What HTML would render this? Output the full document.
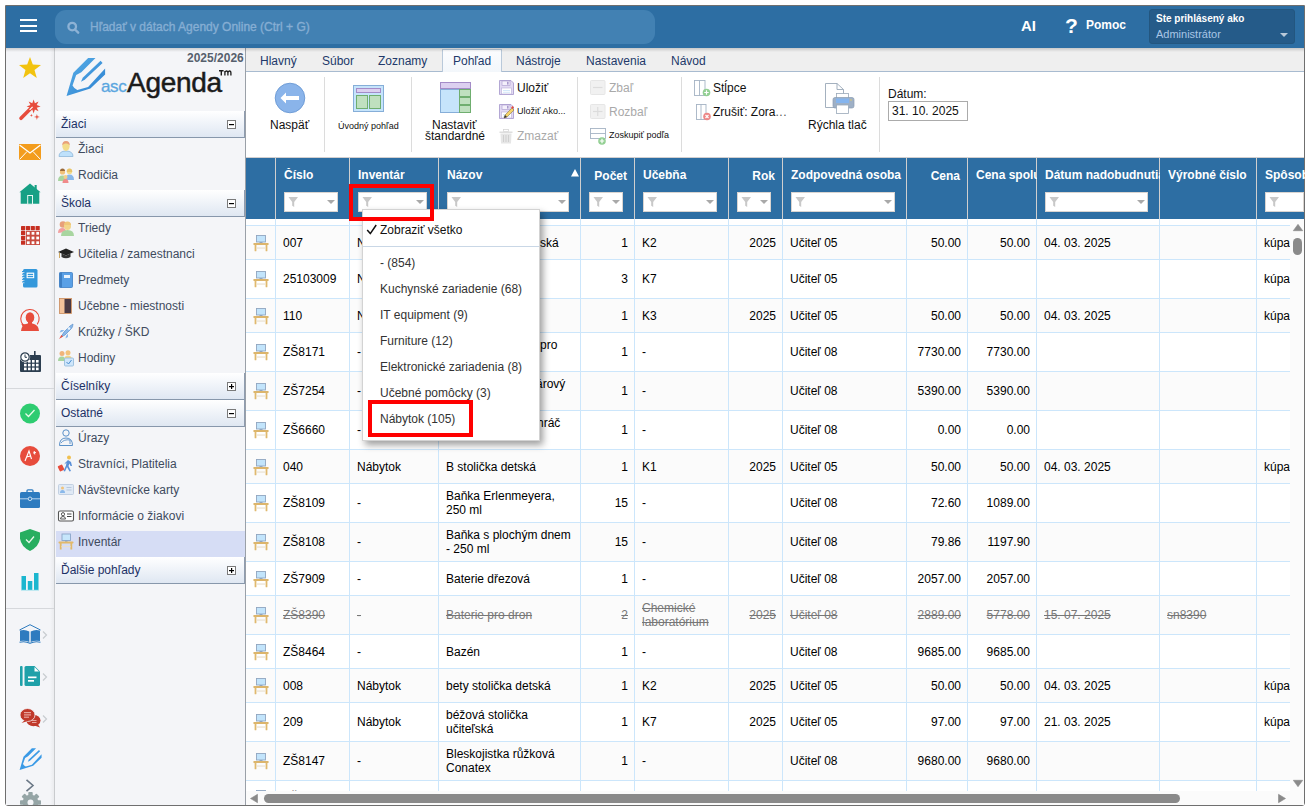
<!DOCTYPE html>
<html><head><meta charset="utf-8"><title>Agenda</title>
<style>
*{box-sizing:border-box}
html,body{margin:0;padding:0}
body{width:1310px;height:811px;background:#fff;position:relative;overflow:hidden;font-family:"Liberation Sans",sans-serif;font-size:12px;color:#000}
.a{position:absolute}
.t{position:absolute;white-space:nowrap;line-height:14px}
svg{position:absolute;overflow:visible}
</style></head><body>

<div class="a" style="left:5px;top:5px;width:1300px;height:801px;border:1px solid #6f6f6f;border-radius:0 0 3px 3px"></div>
<div class="a" style="left:6px;top:6px;width:1298px;height:42px;background:#2d6ea3"></div>
<div class="a" style="left:6px;top:48px;width:1298px;height:4px;background:linear-gradient(rgba(0,0,0,0.16),rgba(0,0,0,0));z-index:5"></div>
<div class="a" style="left:20px;top:19px;width:17px;height:2px;background:#fff"></div>
<div class="a" style="left:20px;top:25px;width:17px;height:2px;background:#fff"></div>
<div class="a" style="left:20px;top:30px;width:17px;height:2px;background:#fff"></div>
<div class="a" style="left:55px;top:10px;width:600px;height:34px;border-radius:11px;background:#4281b3"></div>
<svg style="left:67px;top:22px" width="12" height="12" viewBox="0 0 12 12"><circle cx="5.2" cy="4.6" r="3.8" fill="none" stroke="#8db2d5" stroke-width="2.3"/><line x1="8" y1="7.5" x2="11.2" y2="10.7" stroke="#8db2d5" stroke-width="2.4" stroke-linecap="round"/></svg>
<div class="t" style="left:90px;top:20px;font-size:12px;color:#86aed3;-webkit-text-stroke:0.35px #86aed3">Hľadať v dátach Agendy Online (Ctrl + G)</div>
<div class="t" style="left:1021px;top:18px;font-size:15px;line-height:16px;font-weight:bold;color:#fff">AI</div>
<div class="t" style="left:1065px;top:15px;font-size:21px;line-height:22px;font-weight:bold;color:#fff">?</div>
<div class="t" style="left:1086px;top:18px;font-size:12px;font-weight:bold;color:#fff">Pomoc</div>
<div class="a" style="left:1149px;top:9px;width:146px;height:35px;border-radius:3px;background:#255b89;border:1px solid #23567f"></div>
<div class="t" style="left:1156px;top:13px;font-size:10px;line-height:12px;font-weight:bold;color:#fff">Ste prihlásený ako</div>
<div class="t" style="left:1156px;top:28px;font-size:11px;line-height:13px;color:#a9c6e6">Administrátor</div>
<svg style="left:1280px;top:33px" width="8" height="4" viewBox="0 0 8 4"><polygon points="0,0 8,0 4,4" fill="#b9c9d9"/></svg>
<div class="a" style="left:6px;top:48px;width:48px;height:757px;background:#f4f5f8"></div>
<div class="a" style="left:50px;top:48px;width:4px;height:757px;background:linear-gradient(90deg,rgba(0,0,0,0),rgba(0,0,0,0.04))"></div>
<div class="a" style="left:54px;top:48px;width:1px;height:757px;background:#c9cbce"></div>
<div class="a" style="left:6px;top:388px;width:48px;height:1px;background:#d6d8dc"></div>
<div class="a" style="left:6px;top:608px;width:48px;height:1px;background:#d6d8dc"></div>
<svg style="left:19px;top:57px" width="22" height="21" viewBox="0 0 22 21"><polygon points="11,0 13.8,7.6 22,7.9 15.5,12.9 17.8,21 11,16.3 4.2,21 6.5,12.9 0,7.9 8.2,7.6" fill="#f2c30f"/></svg>
<svg style="left:16px;top:96px" width="28" height="28" viewBox="0 0 28 28"><line x1="5" y1="22.3" x2="15.5" y2="11.8" stroke="#e74c3c" stroke-width="3.6" stroke-linecap="round"/><polygon points="17.60,3.40 18.90,7.26 22.55,5.45 20.74,9.10 24.60,10.40 20.74,11.70 22.55,15.35 18.90,13.54 17.60,17.40 16.30,13.54 12.65,15.35 14.46,11.70 10.60,10.40 14.46,9.10 12.65,5.45 16.30,7.26" fill="#e74c3c"/><line x1="13.6" y1="13.9" x2="16.6" y2="10.9" stroke="#fff" stroke-width="1.1"/><polygon points="15.40,17.70 15.79,18.91 17.00,19.30 15.79,19.69 15.40,20.90 15.01,19.69 13.80,19.30 15.01,18.91" fill="#e74c3c"/><polygon points="20.90,17.90 21.54,20.26 23.90,20.90 21.54,21.54 20.90,23.90 20.26,21.54 17.90,20.90 20.26,20.26" fill="#e74c3c"/></svg>
<svg style="left:19px;top:144px" width="22" height="16" viewBox="0 0 22 16"><rect x="0" y="0" width="22" height="16" fill="#f39c1d"/><polyline points="0.5,1 11,9 21.5,1" fill="none" stroke="#fff" stroke-width="1.2"/><line x1="0.5" y1="15.5" x2="8" y2="7.5" stroke="#fff" stroke-width="1"/><line x1="21.5" y1="15.5" x2="14" y2="7.5" stroke="#fff" stroke-width="1"/></svg>
<svg style="left:19px;top:183px" width="22" height="21" viewBox="0 0 22 21"><polygon points="11,0.4 21.6,9.2 20.3,9.2 20.3,20.7 1.7,20.7 1.7,9.2 0.4,9.2" fill="#17a085"/><rect x="15.6" y="2" width="2.1" height="5.5" fill="#17a085"/><rect x="8.7" y="12.5" width="4.8" height="8.7" fill="#17a085" stroke="#e8f6f2" stroke-width="1"/></svg>
<svg style="left:21px;top:226px" width="19" height="19" viewBox="0 0 19 19"><rect x="0.00" y="0" width="4.2" height="4.2" rx="0.6" fill="#c62f22"/><rect x="4.85" y="0" width="4.2" height="4.2" rx="0.6" fill="#c62f22"/><rect x="9.70" y="0" width="4.2" height="4.2" rx="0.6" fill="#c62f22"/><rect x="14.55" y="0" width="4.2" height="4.2" rx="0.6" fill="#c62f22"/><rect x="0" y="4.85" width="4.2" height="4.2" rx="0.6" fill="#c62f22"/><rect x="0" y="9.70" width="4.2" height="4.2" rx="0.6" fill="#c62f22"/><rect x="0" y="14.55" width="4.2" height="4.2" rx="0.6" fill="#c62f22"/><rect x="4.85" y="4.85" width="14.15" height="14.15" fill="#c84a3e"/><rect x="5.90" y="5.90" width="2.8" height="2.8" fill="#fff"/><rect x="10.60" y="5.90" width="2.8" height="2.8" fill="#fff"/><rect x="15.30" y="5.90" width="2.8" height="2.8" fill="#fff"/><rect x="5.90" y="10.60" width="2.8" height="2.8" fill="#fff"/><rect x="10.60" y="10.60" width="2.8" height="2.8" fill="#fff"/><rect x="15.30" y="10.60" width="2.8" height="2.8" fill="#fff"/><rect x="5.90" y="15.30" width="2.8" height="2.8" fill="#fff"/><rect x="10.60" y="15.30" width="2.8" height="2.8" fill="#fff"/><rect x="15.30" y="15.30" width="2.8" height="2.8" fill="#fff"/></svg>
<svg style="left:22px;top:268px" width="16" height="20" viewBox="0 0 16 20"><rect x="1" y="1" width="14.5" height="18.5" rx="1.5" fill="#3498db"/><rect x="0" y="3.0" width="2.5" height="1.1" fill="#3498db"/><rect x="0.8" y="4.1" width="1.6" height="0.7" fill="#f4f5f8"/><rect x="0" y="5.6" width="2.5" height="1.1" fill="#3498db"/><rect x="0.8" y="6.7" width="1.6" height="0.7" fill="#f4f5f8"/><rect x="0" y="8.2" width="2.5" height="1.1" fill="#3498db"/><rect x="0.8" y="9.3" width="1.6" height="0.7" fill="#f4f5f8"/><rect x="0" y="10.8" width="2.5" height="1.1" fill="#3498db"/><rect x="0.8" y="11.9" width="1.6" height="0.7" fill="#f4f5f8"/><rect x="0" y="13.4" width="2.5" height="1.1" fill="#3498db"/><rect x="0.8" y="14.5" width="1.6" height="0.7" fill="#f4f5f8"/><rect x="4.6" y="4.6" width="7.6" height="5.6" fill="#fff"/><rect x="5.7" y="5.8" width="5.4" height="1.3" fill="#3498db"/><rect x="5.7" y="7.9" width="5.4" height="1.3" fill="#3498db"/></svg>
<svg style="left:20px;top:308px" width="20" height="23" viewBox="0 0 20 23"><path d="M3.3,17 A9.2,9.2 0 1 1 17.2,16.3" fill="none" stroke="#e74c3c" stroke-width="1.1"/><polygon points="1.2,15.8 6.2,16.6 3.2,19.6" fill="#e74c3c"/><ellipse cx="10" cy="9.5" rx="4.3" ry="5.3" fill="#e74c3c"/><path d="M1,23 Q1.3,17 7.5,15.6 L12.5,15.6 Q18.7,17 19,23 Z" fill="#e74c3c"/><rect x="8" y="13" width="4" height="3.5" fill="#e74c3c"/></svg>
<svg style="left:19px;top:351px" width="22" height="21" viewBox="0 0 22 21"><rect x="1" y="4" width="21" height="17" rx="1" fill="#2c3e50"/><rect x="15" y="0" width="1.6" height="5" fill="#2c3e50"/><rect x="5" y="9.0" width="2.6" height="2.6" fill="#fff"/><rect x="9" y="9.0" width="2.6" height="2.6" fill="#fff"/><rect x="13" y="9.0" width="2.6" height="2.6" fill="#fff"/><rect x="17" y="9.0" width="2.6" height="2.6" fill="#fff"/><rect x="5" y="12.8" width="2.6" height="2.6" fill="#fff"/><rect x="9" y="12.8" width="2.6" height="2.6" fill="#fff"/><rect x="13" y="12.8" width="2.6" height="2.6" fill="#fff"/><rect x="17" y="12.8" width="2.6" height="2.6" fill="#fff"/><rect x="5" y="16.6" width="2.6" height="2.6" fill="#fff"/><rect x="9" y="16.6" width="2.6" height="2.6" fill="#fff"/><rect x="13" y="16.6" width="2.6" height="2.6" fill="#fff"/><rect x="17" y="16.6" width="2.6" height="2.6" fill="#fff"/><circle cx="6" cy="6" r="5.2" fill="#fff"/><circle cx="6" cy="6" r="4.2" fill="none" stroke="#2c3e50" stroke-width="1.2"/><polyline points="6,3.5 6,6.3 8,6.3" fill="none" stroke="#2c3e50" stroke-width="1"/></svg>
<svg style="left:20px;top:403px" width="20" height="21" viewBox="0 0 20 21"><circle cx="10" cy="10.5" r="10" fill="#2ecc71"/><polyline points="5.5,10.5 8.5,13.5 14.5,7" fill="none" stroke="#e9fbe9" stroke-width="1.3"/></svg>
<svg style="left:20px;top:446px" width="20" height="20" viewBox="0 0 20 20"><circle cx="10" cy="10" r="10" fill="#e74c3c"/><path d="M5,15 L9,5 L11.5,13 M6.5,11 L10.5,10" fill="none" stroke="#fff" stroke-width="1.1"/><path d="M13,7 L16,6.5 M14.2,5 L14.8,8.5" fill="none" stroke="#fff" stroke-width="1"/></svg>
<svg style="left:20px;top:489px" width="20" height="19" viewBox="0 0 20 19"><rect x="7" y="0.8" width="6" height="3" rx="1" fill="none" stroke="#2e7bbf" stroke-width="1.3"/><rect x="0" y="3" width="20" height="16" rx="1.5" fill="#2e7bbf"/><rect x="0" y="9.3" width="20" height="1" fill="#b8d4ee"/><circle cx="10" cy="9.8" r="1.8" fill="#2e7bbf" stroke="#cfe2f3" stroke-width="0.9"/></svg>
<svg style="left:20px;top:529px" width="20" height="22" viewBox="0 0 20 22"><path d="M10,0 L20,3.5 L20,9.5 Q19,17.5 10,22 Q1,17.5 0,9.5 L0,3.5 Z" fill="#27ae60"/><polyline points="6,10.5 9,13.5 14,7.5" fill="none" stroke="#e6f7ea" stroke-width="1.3"/></svg>
<svg style="left:21px;top:573px" width="18" height="18" viewBox="0 0 18 18"><rect x="0.5" y="3" width="4.5" height="14" fill="#1bb6cf"/><rect x="6.8" y="8" width="4.5" height="9" fill="#1bb6cf"/><rect x="13" y="0" width="4.5" height="17" fill="#1bb6cf"/><rect x="0" y="16.8" width="18" height="1" fill="#b4e6ef"/></svg>
<svg style="left:19px;top:624px" width="22" height="20" viewBox="0 0 22 20"><polyline points="0.5,6 11,0.7 21.5,6" fill="none" stroke="#2e7bbf" stroke-width="1"/><path d="M1,6.5 Q6,5 10.3,7.5 L10.3,18 Q6,16 1,17 Z" fill="#2e7bbf"/><path d="M21,6.5 Q16,5 11.7,7.5 L11.7,18 Q16,16 21,17 Z" fill="#2e7bbf"/><path d="M0.5,18.3 Q6,16.8 11,19.3 Q16,16.8 21.5,18.3" fill="none" stroke="#2e7bbf" stroke-width="1.1"/></svg>
<svg style="left:42px;top:631px" width="6" height="8" viewBox="0 0 6 8"><polyline points="1,0.5 4.5,4 1,7.5" fill="none" stroke="#c8ccd0" stroke-width="1.2"/></svg>
<svg style="left:20px;top:666px" width="20" height="20" viewBox="0 0 20 20"><rect x="0" y="0" width="2.6" height="20" rx="1" fill="#1fa1a9"/><path d="M4.5,1.5 Q4.5,0 6,0 L14.5,0 L20,5.5 L20,18.5 Q20,20 18.5,20 L6,20 Q4.5,20 4.5,18.5 Z" fill="#1fa1a9"/><polygon points="14.5,1 14.5,5.5 19,5.5" fill="#fff"/><rect x="8" y="10.5" width="8.5" height="1.7" fill="#fff"/><rect x="8" y="14" width="6" height="1.7" fill="#fff"/></svg>
<svg style="left:42px;top:673px" width="6" height="8" viewBox="0 0 6 8"><polyline points="1,0.5 4.5,4 1,7.5" fill="none" stroke="#c8ccd0" stroke-width="1.2"/></svg>
<svg style="left:20px;top:708px" width="21" height="20" viewBox="0 0 21 20"><ellipse cx="13.5" cy="12.5" rx="7" ry="5.8" fill="#c0392b"/><polygon points="13,17 20,19.5 17,15" fill="#c0392b"/><ellipse cx="7.5" cy="7" rx="7.5" ry="6.5" fill="#c0392b" stroke="#f4f5f8" stroke-width="0.8"/><polygon points="1.5,15 5,12 8,13" fill="#c0392b"/><rect x="4" y="4" width="7" height="1.2" fill="#e8a59e"/><rect x="4" y="6.3" width="7" height="1.2" fill="#e8a59e"/><rect x="4" y="8.6" width="5" height="1.2" fill="#e8a59e"/><rect x="12" y="12" width="4.5" height="1" fill="#e8a59e"/><rect x="12" y="14" width="4.5" height="1" fill="#e8a59e"/></svg>
<svg style="left:42px;top:715px" width="6" height="8" viewBox="0 0 6 8"><polyline points="1,0.5 4.5,4 1,7.5" fill="none" stroke="#c8ccd0" stroke-width="1.2"/></svg>
<svg style="left:16.6px;top:746.3px" width="27.4" height="26.2" viewBox="0 0 48 46"><path d="M4.54,41.99 L11.35,18.72 L26.1,3.97 L33.48,3.97 L19.29,18.16 L14.18,20.99 L10.5,31.49 Q12,34.5 15.32,36.03 L26.1,32.91 L43.12,14.47 L43.12,20.43 L28.37,34.61 Z" fill="#3a9ae6"/><path d="M38.58,6.81 L40.57,9.08 L22.7,25.82 L19.0,27.8 L20.71,23.83 Z" fill="#3a9ae6"/></svg>
<svg style="left:25px;top:779px" width="10" height="13" viewBox="0 0 10 13"><polyline points="1.5,0.8 8,6.5 1.5,12.2" fill="none" stroke="#6b7886" stroke-width="1.6"/></svg>
<div class="a" style="left:6px;top:780px;width:48px;height:25px;overflow:hidden"><svg style="left:14px;top:12px" width="21" height="21" viewBox="-10.5 -10.5 21 21"><g fill="#95a5a6"><rect x="-2.2" y="-10.5" width="4.4" height="5" rx="0.8" transform="rotate(0)"/><rect x="-2.2" y="-10.5" width="4.4" height="5" rx="0.8" transform="rotate(45)"/><rect x="-2.2" y="-10.5" width="4.4" height="5" rx="0.8" transform="rotate(90)"/><rect x="-2.2" y="-10.5" width="4.4" height="5" rx="0.8" transform="rotate(135)"/><rect x="-2.2" y="-10.5" width="4.4" height="5" rx="0.8" transform="rotate(180)"/><rect x="-2.2" y="-10.5" width="4.4" height="5" rx="0.8" transform="rotate(225)"/><rect x="-2.2" y="-10.5" width="4.4" height="5" rx="0.8" transform="rotate(270)"/><rect x="-2.2" y="-10.5" width="4.4" height="5" rx="0.8" transform="rotate(315)"/><circle cx="0" cy="0" r="7.8"/></g><circle cx="0" cy="0" r="3" fill="#f4f5f8"/></svg></div>
<div class="a" style="left:55px;top:48px;width:190px;height:757px;background:#f4f5f8"></div>
<div class="a" style="left:245px;top:48px;width:1px;height:757px;background:#9aa0a8"></div>
<div class="t" style="left:187px;top:51px;font-size:12px;font-weight:bold;color:#56606d">2025/2026</div>
<svg style="left:62px;top:54px" width="48" height="46" viewBox="0 0 48 46"><defs><linearGradient id="pg" x1="0" y1="0" x2="1" y2="1"><stop offset="0" stop-color="#5ab0e8"/><stop offset="1" stop-color="#2a7fd0"/></linearGradient></defs><path d="M4.54,41.99 L11.35,18.72 L26.1,3.97 L33.48,3.97 L19.29,18.16 L14.18,20.99 L10.5,31.49 Q12,34.5 15.32,36.03 L26.1,32.91 L43.12,14.47 L43.12,20.43 L28.37,34.61 Z" fill="url(#pg)"/><path d="M38.58,6.81 L40.57,9.08 L22.7,25.82 L19.0,27.8 L20.71,23.83 Z" fill="url(#pg)"/></svg>
<div class="t" style="left:101px;top:77px;font-size:17px;line-height:20px;color:#5aa6e0;letter-spacing:-0.4px;-webkit-text-stroke:0.3px #5aa6e0">asc</div>
<div class="t" style="left:127px;top:67px;font-size:28px;line-height:32px;color:#1b1b1b;letter-spacing:-0.3px;-webkit-text-stroke:0.5px #1b1b1b">Agenda</div>
<svg style="left:219px;top:70px" width="14" height="6" viewBox="0 0 14 6"><path d="M0,0.7 H4.6 M2.3,0.7 V5.4" stroke="#1b1b1b" stroke-width="1.4" fill="none"/><path d="M5.9,5.4 V1 M5.9,2.2 Q6.9,0.6 8.1,1.1 Q8.9,1.5 8.9,2.8 V5.4 M8.9,2.4 Q9.9,0.6 11.1,1.1 Q11.9,1.5 11.9,2.8 V5.4" stroke="#1b1b1b" stroke-width="1.3" fill="none"/></svg>
<div class="a" style="left:56px;top:111px;width:189px;height:27px;background:linear-gradient(#ffffff,#dfe7f2);border-bottom:1px solid #8797ab;border-right:1px solid #8f9db0"></div>
<div class="t" style="left:61px;top:117px;font-size:12px;color:#1d3166">Žiaci</div>
<div class="a" style="left:227px;top:120px;width:9px;height:9px;border:1px solid #7a7a7a;background:#fff"></div>
<div class="a" style="left:229px;top:124px;width:5px;height:1px;background:#000;box-shadow:0 0.4px 0 rgba(0,0,0,0.5)"></div>
<svg style="left:58px;top:140px" width="16" height="17" viewBox="0 0 16 17"><path d="M1,16.5 Q1,11 8,11 Q15,11 15,16.5 Z" fill="#bfe1fb" stroke="#8fb7d9" stroke-width="0.8"/><ellipse cx="8" cy="6.3" rx="3.6" ry="4.6" fill="#f3dc8a"/><path d="M4.3,5.5 Q4,1 8,1 Q12,1 11.7,5.5 Q10,3 8,3.5 Q6,3 4.3,5.5 Z" fill="#e8a07a"/></svg>
<div class="t" style="left:78px;top:142px;font-size:12px;color:#404b5e">Žiaci</div>
<svg style="left:58px;top:166px" width="16" height="17" viewBox="0 0 16 17"><path d="M0,15 Q0,9.5 4.5,9.5 Q8.5,9.5 8.5,15 Z" fill="#a8d5a0"/><circle cx="4.5" cy="6" r="2.6" fill="#f0c27a"/><path d="M2,5 Q2,2.5 4.5,2.5 Q7,2.5 7,5 Z" fill="#9b6a3a"/><path d="M7.5,14 Q7.5,8.5 11.5,8.5 Q16,8.5 16,14 Z" fill="#8ab8ea"/><circle cx="11.5" cy="5.5" r="2.7" fill="#f3dc8a"/><path d="M8.8,6 Q8.5,2.5 11.5,2.5 Q14.5,2.5 14.2,6 Z" fill="#e8c46a"/><path d="M4.5,17 Q4.5,13 7.5,13 Q10.5,13 10.5,17 Z" fill="#f08a8a"/><circle cx="7.5" cy="11" r="2" fill="#f3cf8a"/></svg>
<div class="t" style="left:78px;top:168px;font-size:12px;color:#404b5e">Rodičia</div>
<div class="a" style="left:56px;top:190px;width:189px;height:27px;background:linear-gradient(#ffffff,#dfe7f2);border-bottom:1px solid #8797ab;border-right:1px solid #8f9db0"></div>
<div class="t" style="left:61px;top:196px;font-size:12px;color:#1d3166">Škola</div>
<div class="a" style="left:227px;top:199px;width:9px;height:9px;border:1px solid #7a7a7a;background:#fff"></div>
<div class="a" style="left:229px;top:203px;width:5px;height:1px;background:#000;box-shadow:0 0.4px 0 rgba(0,0,0,0.5)"></div>
<svg style="left:58px;top:219px" width="16" height="17" viewBox="0 0 16 17"><path d="M0,14 Q0,9 4.5,9 Q8,9 8,13 Z" fill="#f2a0a0"/><circle cx="5" cy="5.5" r="3.3" fill="#e8a07a"/><path d="M3,17 Q3,11 9.5,11 Q16,11 16,17 Z" fill="#a8d5a0"/><ellipse cx="9.5" cy="7" rx="3.5" ry="4" fill="#f3d68a"/><path d="M6,6 Q6,2.5 9.5,2.5 Q13,2.5 13,6 Z" fill="#f0c77a"/></svg>
<div class="t" style="left:78px;top:221px;font-size:12px;color:#404b5e">Triedy</div>
<svg style="left:58px;top:245px" width="16" height="17" viewBox="0 0 16 17"><polygon points="0,7 8,3.5 16,7 8,10.5" fill="#222"/><path d="M3.5,8.5 L3.5,12 Q8,14.5 12.5,12 L12.5,8.5 L8,10.5 Z" fill="#333"/><line x1="1.5" y1="7.5" x2="1.5" y2="13" stroke="#c9a050" stroke-width="0.9"/></svg>
<div class="t" style="left:78px;top:247px;font-size:12px;color:#404b5e">Učitelia / zamestnanci</div>
<svg style="left:58px;top:271px" width="16" height="17" viewBox="0 0 16 17"><rect x="1.5" y="1.5" width="13" height="15" rx="1" fill="#5aa0e6" stroke="#3e7fc4" stroke-width="0.8"/><rect x="1.5" y="1.5" width="2.5" height="15" fill="#3e7fc4"/><rect x="6" y="4" width="6" height="3" fill="#e9f3fd"/></svg>
<div class="t" style="left:78px;top:273px;font-size:12px;color:#404b5e">Predmety</div>
<svg style="left:58px;top:297px" width="16" height="17" viewBox="0 0 16 17"><rect x="1.5" y="1.5" width="12" height="15" fill="#f3c29a" stroke="#c98a5a" stroke-width="0.8"/><rect x="6.5" y="2" width="6.5" height="14" fill="#4a3a44"/></svg>
<div class="t" style="left:78px;top:299px;font-size:12px;color:#404b5e">Učebne - miestnosti</div>
<svg style="left:58px;top:323px" width="16" height="17" viewBox="0 0 16 17"><path d="M3,14 L6,9 L12,3 Q15,1 15,1 Q15,4 13,6 L7,12 Z" fill="#8ab8ea" stroke="#5a90cc" stroke-width="0.7"/><circle cx="11" cy="5.5" r="1.3" fill="#e9f3fd"/><path d="M1,16 L3.5,12 L5,13.5 Z" fill="#e74c3c"/><path d="M4,9 L1.5,9.5 L3,7 L6.5,7 Z" fill="#8ab8ea"/><path d="M8,13 L7.5,15.5 L10,14 L10,10.5 Z" fill="#8ab8ea"/></svg>
<div class="t" style="left:78px;top:325px;font-size:12px;color:#404b5e">Krúžky / ŠKD</div>
<svg style="left:58px;top:349px" width="16" height="17" viewBox="0 0 16 17"><path d="M0,12 Q0,7.5 4,7.5 Q7.5,7.5 7.5,12 Z" fill="#a8d5a0"/><circle cx="4" cy="4.5" r="2.5" fill="#f0b47a"/><path d="M6,11 Q6,6.5 10,6.5 Q14,6.5 14,11 Z" fill="#f3d68a"/><circle cx="10" cy="3.8" r="2.5" fill="#f3c27a"/><rect x="6.5" y="9" width="9" height="8" rx="1" fill="#cfe6fb" stroke="#8fb7d9" stroke-width="0.8"/><polyline points="8.5,13 10.5,15 13.5,11" fill="none" stroke="#4a8fd0" stroke-width="1"/></svg>
<div class="t" style="left:78px;top:351px;font-size:12px;color:#404b5e">Hodiny</div>
<div class="a" style="left:56px;top:373px;width:189px;height:27px;background:linear-gradient(#ffffff,#dfe7f2);border-bottom:1px solid #8797ab;border-right:1px solid #8f9db0"></div>
<div class="t" style="left:61px;top:379px;font-size:12px;color:#1d3166">Číselníky</div>
<div class="a" style="left:227px;top:382px;width:9px;height:9px;border:1px solid #7a7a7a;background:#fff"></div>
<div class="a" style="left:229px;top:386px;width:5px;height:1px;background:#000;box-shadow:0 0.4px 0 rgba(0,0,0,0.5)"></div>
<div class="a" style="left:231px;top:384px;width:1px;height:5px;background:#000;box-shadow:0.4px 0 0 rgba(0,0,0,0.5)"></div>
<div class="a" style="left:56px;top:400px;width:189px;height:27px;background:linear-gradient(#ffffff,#dfe7f2);border-bottom:1px solid #8797ab;border-right:1px solid #8f9db0"></div>
<div class="t" style="left:61px;top:406px;font-size:12px;color:#1d3166">Ostatné</div>
<div class="a" style="left:227px;top:409px;width:9px;height:9px;border:1px solid #7a7a7a;background:#fff"></div>
<div class="a" style="left:229px;top:413px;width:5px;height:1px;background:#000;box-shadow:0 0.4px 0 rgba(0,0,0,0.5)"></div>
<svg style="left:58px;top:429px" width="16" height="17" viewBox="0 0 16 17"><circle cx="8" cy="4" r="3.2" fill="none" stroke="#5a90c8" stroke-width="1"/><path d="M1.5,16.5 Q1.5,9 8,9 Q14.5,9 14.5,16.5 Z" fill="none" stroke="#5a90c8" stroke-width="1"/><path d="M3,14 Q6,10 12,11 L12,15" fill="none" stroke="#5a90c8" stroke-width="0.9"/></svg>
<div class="t" style="left:78px;top:431px;font-size:12px;color:#404b5e">Úrazy</div>
<svg style="left:58px;top:455px" width="16" height="17" viewBox="0 0 16 17"><circle cx="11" cy="2.5" r="2" fill="#f0c050"/><path d="M7,8 L10,5 L13,7 L14,11 L12.5,11 L11.5,8.5 L10.5,11 L13,16 L11.5,16.5 L9,12 L7,16.5 L5.5,16 L8,10.5 L8.5,7.5 L6.5,9.5 Z" fill="#5a90d8"/><rect x="0.5" y="10" width="5" height="6" rx="1" transform="rotate(-25 3 13)" fill="#e74c3c"/></svg>
<div class="t" style="left:78px;top:457px;font-size:12px;color:#404b5e">Stravníci, Platitelia</div>
<svg style="left:58px;top:481px" width="16" height="17" viewBox="0 0 16 17"><rect x="0.5" y="3.5" width="15" height="10" rx="1" fill="#dfe9f5" stroke="#b8c8dc" stroke-width="0.8"/><circle cx="4.5" cy="7" r="1.5" fill="#f0c27a"/><path d="M2,12 Q2,9 4.5,9 Q7,9 7,12 Z" fill="#8ab8ea"/><rect x="8.5" y="6" width="5" height="1" fill="#b8c8dc"/><rect x="8.5" y="8.5" width="5" height="1" fill="#b8c8dc"/></svg>
<div class="t" style="left:78px;top:483px;font-size:12px;color:#404b5e">Návštevnícke karty</div>
<svg style="left:58px;top:507px" width="16" height="17" viewBox="0 0 16 17"><rect x="0.5" y="4" width="15" height="10" rx="1.5" fill="#fff" stroke="#555" stroke-width="1.1"/><circle cx="5" cy="7.2" r="1.6" fill="none" stroke="#444" stroke-width="0.9"/><path d="M2.5,12 Q2.5,9.5 5,9.5 Q7.5,9.5 7.5,12 Z" fill="none" stroke="#444" stroke-width="0.9"/><rect x="9" y="6.5" width="4.5" height="1" fill="#444"/><rect x="9" y="9" width="4.5" height="1" fill="#444"/></svg>
<div class="t" style="left:78px;top:509px;font-size:12px;color:#404b5e">Informácie o žiakovi</div>
<div class="a" style="left:56px;top:531px;width:189px;height:26px;background:#d6ddf5"></div>
<svg style="left:58px;top:533px" width="16" height="17" viewBox="0 0 16 17"><rect x="4" y="1" width="8.5" height="6.5" fill="#c6e6fb" stroke="#8aa6c8" stroke-width="0.9"/><rect x="7" y="7.5" width="2.5" height="1.3" fill="#8aa6c8"/><rect x="0.5" y="8.5" width="15" height="2" rx="0.8" fill="#e2b96a"/><rect x="1.8" y="10" width="1.8" height="6.5" fill="#e2b96a"/><rect x="12.4" y="10" width="1.8" height="6.5" fill="#e2b96a"/><rect x="3.5" y="13" width="9" height="1.2" fill="#e8dfcf"/></svg>
<div class="t" style="left:78px;top:535px;font-size:12px;color:#404b5e">Inventár</div>
<div class="a" style="left:56px;top:557px;width:189px;height:27px;background:linear-gradient(#ffffff,#dfe7f2);border-bottom:1px solid #8797ab;border-right:1px solid #8f9db0"></div>
<div class="t" style="left:61px;top:563px;font-size:12px;color:#1d3166">Ďalšie pohľady</div>
<div class="a" style="left:227px;top:566px;width:9px;height:9px;border:1px solid #7a7a7a;background:#fff"></div>
<div class="a" style="left:229px;top:570px;width:5px;height:1px;background:#000;box-shadow:0 0.4px 0 rgba(0,0,0,0.5)"></div>
<div class="a" style="left:231px;top:568px;width:1px;height:5px;background:#000;box-shadow:0.4px 0 0 rgba(0,0,0,0.5)"></div>
<div class="a" style="left:246px;top:48px;width:1058px;height:24px;background:#efefef;border-bottom:1px solid #a8bbd0"></div>
<div class="a" style="left:442px;top:49px;width:60px;height:23px;background:linear-gradient(#fbfcfe,#f3f7fb);border:1px solid #b9c9da;border-bottom:none"></div>
<div class="t" style="left:260px;top:54px;color:#22396a">Hlavný</div>
<div class="t" style="left:322px;top:54px;color:#22396a">Súbor</div>
<div class="t" style="left:378px;top:54px;color:#22396a">Zoznamy</div>
<div class="t" style="left:453px;top:54px;color:#22396a">Pohľad</div>
<div class="t" style="left:516px;top:54px;color:#22396a">Nástroje</div>
<div class="t" style="left:586px;top:54px;color:#22396a">Nastavenia</div>
<div class="t" style="left:671px;top:54px;color:#22396a">Návod</div>
<div class="a" style="left:246px;top:72px;width:1058px;height:85px;background:#fff"></div>
<div class="a" style="left:324px;top:77px;width:1px;height:75px;background:#dcdcdc"></div>
<div class="a" style="left:411px;top:77px;width:1px;height:75px;background:#dcdcdc"></div>
<div class="a" style="left:577px;top:77px;width:1px;height:75px;background:#dcdcdc"></div>
<div class="a" style="left:681px;top:77px;width:1px;height:75px;background:#dcdcdc"></div>
<div class="a" style="left:879px;top:77px;width:1px;height:75px;background:#dcdcdc"></div>
<svg style="left:274px;top:82px" width="32" height="32" viewBox="0 0 32 32"><circle cx="16" cy="16" r="14.8" fill="#8ab4ea" stroke="#6a98d4" stroke-width="0.9"/><polygon points="6.5,16 12,10.5 12,14 25,14 25,18 12,18 12,21.5" fill="#fff"/></svg>
<div class="t" style="left:270px;top:118px;color:#111">Naspäť</div>
<svg style="left:353px;top:85px" width="31" height="27" viewBox="0 0 31 27"><rect x="0.5" y="0.5" width="30" height="26" fill="#c6e4fb" stroke="#86aed8"/><rect x="3.5" y="3.5" width="24" height="4" fill="#dcd0f0" stroke="#a48cc8"/><rect x="3.5" y="10.5" width="11" height="13" fill="#bfe0bf" stroke="#6fae6f"/><rect x="16.5" y="10.5" width="11" height="13" fill="#bfe0bf" stroke="#6fae6f"/></svg>
<div class="t" style="left:338px;top:121px;font-size:9px;line-height:10px;color:#111">Úvodný pohľad</div>
<svg style="left:440px;top:82px" width="31" height="31" viewBox="0 0 31 31"><rect x="0.5" y="0.5" width="30" height="6" fill="#dcd0f0" stroke="#a48cc8"/><rect x="0.5" y="7.5" width="19" height="23" fill="#c6e4fb" stroke="#86aed8"/><rect x="19.5" y="7.5" width="11" height="7" fill="#bfe0bf" stroke="#6fae6f"/><rect x="19.5" y="15.5" width="11" height="7" fill="#bfe0bf" stroke="#6fae6f"/><rect x="19.5" y="23.5" width="11" height="7" fill="#bfe0bf" stroke="#6fae6f"/></svg>
<div class="t" style="left:432px;top:120px;line-height:11px;color:#111">Nastaviť</div>
<div class="t" style="left:425px;top:131px;line-height:11px;color:#111">štandardné</div>
<svg style="left:499px;top:80px" width="15" height="15" viewBox="0 0 15 15"><path d="M0.5,0.5 H12 L14.5,3 V14.5 H0.5 Z" fill="#e2daf3" stroke="#ab9fcf" stroke-width="0.9"/><rect x="3" y="1" width="8" height="4.5" fill="#f4f0fb" stroke="#a898cc" stroke-width="0.6"/><rect x="8" y="1.8" width="1.6" height="2.8" fill="#a898cc"/><rect x="2.5" y="8" width="10" height="6" fill="#fff" stroke="#b8acd8" stroke-width="0.6"/><line x1="4" y1="10.5" x2="11" y2="10.5" stroke="#c9e2f7" stroke-width="0.8"/><line x1="4" y1="12.3" x2="11" y2="12.3" stroke="#c9e2f7" stroke-width="0.8"/></svg>
<div class="t" style="left:517px;top:81px;color:#111">Uložiť</div>
<svg style="left:499px;top:104px" width="15" height="15" viewBox="0 0 15 15"><path d="M0.5,0.5 H12 L14.5,3 V14.5 H0.5 Z" fill="#e2daf3" stroke="#ab9fcf" stroke-width="0.9"/><rect x="3" y="1" width="8" height="4.5" fill="#f4f0fb" stroke="#a898cc" stroke-width="0.6"/><rect x="8" y="1.8" width="1.6" height="2.8" fill="#a898cc"/><rect x="2.5" y="8" width="10" height="6" fill="#fff" stroke="#b8acd8" stroke-width="0.6"/><line x1="4" y1="10.5" x2="11" y2="10.5" stroke="#c9e2f7" stroke-width="0.8"/><line x1="4" y1="12.3" x2="11" y2="12.3" stroke="#c9e2f7" stroke-width="0.8"/><path d="M5,14 L6,11 L13,4 L15,6 L8,13 Z" fill="#f5d36b" stroke="#8a7a4a" stroke-width="0.6"/><path d="M5,14 L6,11 L8,13 Z" fill="#333"/><rect x="12.5" y="2.5" width="2" height="2" fill="#e74c3c" transform="rotate(45 13.5 3.5)"/></svg>
<div class="t" style="left:517px;top:106px;font-size:9px;line-height:10px;color:#111">Uložiť Ako...</div>
<svg style="left:499px;top:129px" width="14" height="15" viewBox="0 0 14 15"><rect x="4.5" y="0.5" width="5" height="2" fill="none" stroke="#d6d6d6" stroke-width="0.8"/><rect x="0.5" y="2.5" width="13" height="1.5" fill="#dedede"/><path d="M1.5,4.5 H12.5 L12,14.5 H2 Z" fill="#e6e6e6"/><line x1="4.5" y1="6" x2="4.5" y2="13" stroke="#cfcfcf"/><line x1="7" y1="6" x2="7" y2="13" stroke="#cfcfcf"/><line x1="9.5" y1="6" x2="9.5" y2="13" stroke="#cfcfcf"/></svg>
<div class="t" style="left:517px;top:129px;color:#a9a9a9">Zmazať</div>
<svg style="left:590px;top:80px" width="16" height="15" viewBox="0 0 16 15"><rect x="0.5" y="0.5" width="14.5" height="14" rx="1" fill="#f1f1f1" stroke="#e6e6e6"/><line x1="3" y1="7.5" x2="12.5" y2="7.5" stroke="#dcdcdc" stroke-width="1.2"/></svg>
<div class="t" style="left:609px;top:81px;color:#a9a9a9">Zbaľ</div>
<svg style="left:590px;top:104px" width="16" height="15" viewBox="0 0 16 15"><rect x="0.5" y="0.5" width="14.5" height="14" rx="1" fill="#f1f1f1" stroke="#e6e6e6"/><line x1="3" y1="7.5" x2="12.5" y2="7.5" stroke="#dcdcdc" stroke-width="1.2"/><line x1="7.75" y1="3" x2="7.75" y2="12" stroke="#dcdcdc" stroke-width="1.2"/></svg>
<div class="t" style="left:609px;top:105px;color:#a9a9a9">Rozbaľ</div>
<svg style="left:590px;top:128px" width="17" height="17" viewBox="0 0 17 17"><rect x="0.5" y="0.5" width="15" height="10" fill="#fff" stroke="#a5b3c4" stroke-width="0.9"/><line x1="0.5" y1="5.5" x2="15.5" y2="5.5" stroke="#a5b3c4" stroke-width="0.9"/><circle cx="12" cy="13" r="3.8" fill="#92cf92"/><path d="M12,10.8 V15.2 M9.8,13 H14.2" stroke="#fff" stroke-width="1.2"/></svg>
<div class="t" style="left:609px;top:130px;font-size:9px;line-height:10px;color:#111">Zoskupiť podľa</div>
<svg style="left:694px;top:80px" width="17" height="17" viewBox="0 0 17 17"><rect x="0.5" y="0.5" width="10.5" height="15" fill="#fff" stroke="#a5b3c4" stroke-width="0.9"/><line x1="5.5" y1="0.5" x2="5.5" y2="15.5" stroke="#a5b3c4" stroke-width="0.9"/><circle cx="12.5" cy="12.5" r="3.8" fill="#92cf92"/><path d="M12.5,10.3 V14.7 M10.3,12.5 H14.7" stroke="#fff" stroke-width="1.2"/></svg>
<div class="t" style="left:713px;top:81px;color:#111">Stĺpce</div>
<svg style="left:696px;top:104px" width="17" height="17" viewBox="0 0 17 17"><rect x="0.5" y="0.5" width="9.5" height="15" fill="#fff" stroke="#a5b3c4" stroke-width="0.9"/><line x1="5" y1="0.5" x2="5" y2="15.5" stroke="#a5b3c4" stroke-width="0.9"/><circle cx="11" cy="12.5" r="3.8" fill="#ec8787"/><path d="M9.5,11 L12.5,14 M12.5,11 L9.5,14" stroke="#fff" stroke-width="1.1"/></svg>
<div class="t" style="left:713px;top:105px;color:#111">Zrušiť: Zora<span style="letter-spacing:0.5px;color:#555">...</span></div>
<svg style="left:825px;top:83px" width="30" height="31" viewBox="0 0 30 31"><path d="M0.5,0.5 H12 L18.5,6.5 V24.5 H0.5 Z" fill="#fff" stroke="#9aa8b8" stroke-width="0.9"/><path d="M12,0.5 V6.5 H18.5" fill="none" stroke="#9aa8b8" stroke-width="0.9"/><rect x="11.5" y="10.5" width="12" height="8" fill="#fff" stroke="#9aa8b8" stroke-width="0.8"/><rect x="8" y="14.5" width="21" height="10.5" rx="2" fill="#9eb0c6" stroke="#8a9cb2" stroke-width="0.7"/><rect x="11" y="15.5" width="13" height="4.5" fill="#84b4ee"/><rect x="11.5" y="22" width="12" height="8.5" fill="#fff" stroke="#9aa8b8" stroke-width="0.8"/><circle cx="26" cy="17" r="0.7" fill="#f0d050"/></svg>
<div class="t" style="left:808px;top:118px;color:#111">Rýchla tlač</div>
<div class="t" style="left:888px;top:87px;color:#111">Dátum:</div>
<div class="a" style="left:888px;top:101px;width:80px;height:20px;border:1px solid #ababab;background:#fff"></div>
<div class="t" style="left:892px;top:104px;color:#111">31. 10. 2025</div>
<div class="a" style="left:246px;top:157px;width:1058px;height:1px;background:#d2cfcf"></div>
<div class="a" style="left:246px;top:158px;width:1058px;height:61px;background:#2d6ea3"></div>
<div class="a" style="left:275px;top:158px;width:1px;height:61px;background:#cfcfcf"></div>
<div class="a" style="left:349px;top:158px;width:1px;height:61px;background:#cfcfcf"></div>
<div class="t" style="left:284px;top:168px;width:66px;overflow:hidden;font-weight:bold;color:#fff">Číslo</div>
<div class="a" style="left:284px;top:192px;width:54px;height:20px;background:#fff;border:1px solid #d9d4d0"></div>
<svg style="left:288px;top:197px" width="11" height="11" viewBox="0 0 11 11"><path d="M0.5,0 H10 L6.2,5 V10 L4.2,8.8 V5 Z" fill="#c8c8c8"/></svg>
<svg style="left:327px;top:200px" width="8" height="4" viewBox="0 0 8 4"><polygon points="0,0 8,0 4,4" fill="#a9a9a9"/></svg>
<div class="a" style="left:438px;top:158px;width:1px;height:61px;background:#cfcfcf"></div>
<div class="t" style="left:358px;top:168px;width:81px;overflow:hidden;font-weight:bold;color:#fff">Inventár</div>
<div class="a" style="left:358px;top:192px;width:69px;height:20px;background:#fff;border:1px solid #d9d4d0"></div>
<svg style="left:362px;top:197px" width="11" height="11" viewBox="0 0 11 11"><path d="M0.5,0 H10 L6.2,5 V10 L4.2,8.8 V5 Z" fill="#c8c8c8"/></svg>
<svg style="left:416px;top:200px" width="8" height="4" viewBox="0 0 8 4"><polygon points="0,0 8,0 4,4" fill="#a9a9a9"/></svg>
<div class="a" style="left:580px;top:158px;width:1px;height:61px;background:#cfcfcf"></div>
<div class="t" style="left:447px;top:168px;width:134px;overflow:hidden;font-weight:bold;color:#fff">Názov</div>
<div class="a" style="left:447px;top:192px;width:122px;height:20px;background:#fff;border:1px solid #d9d4d0"></div>
<svg style="left:451px;top:197px" width="11" height="11" viewBox="0 0 11 11"><path d="M0.5,0 H10 L6.2,5 V10 L4.2,8.8 V5 Z" fill="#c8c8c8"/></svg>
<svg style="left:558px;top:200px" width="8" height="4" viewBox="0 0 8 4"><polygon points="0,0 8,0 4,4" fill="#a9a9a9"/></svg>
<div class="a" style="left:634px;top:158px;width:1px;height:61px;background:#cfcfcf"></div>
<div class="t" style="left:581px;width:46px;text-align:right;top:169px;font-weight:bold;color:#fff">Počet</div>
<div class="a" style="left:589px;top:192px;width:34px;height:20px;background:#fff;border:1px solid #d9d4d0"></div>
<svg style="left:593px;top:197px" width="11" height="11" viewBox="0 0 11 11"><path d="M0.5,0 H10 L6.2,5 V10 L4.2,8.8 V5 Z" fill="#c8c8c8"/></svg>
<svg style="left:612px;top:200px" width="8" height="4" viewBox="0 0 8 4"><polygon points="0,0 8,0 4,4" fill="#a9a9a9"/></svg>
<div class="a" style="left:728px;top:158px;width:1px;height:61px;background:#cfcfcf"></div>
<div class="t" style="left:643px;top:168px;width:86px;overflow:hidden;font-weight:bold;color:#fff">Učebňa</div>
<div class="a" style="left:643px;top:192px;width:74px;height:20px;background:#fff;border:1px solid #d9d4d0"></div>
<svg style="left:647px;top:197px" width="11" height="11" viewBox="0 0 11 11"><path d="M0.5,0 H10 L6.2,5 V10 L4.2,8.8 V5 Z" fill="#c8c8c8"/></svg>
<svg style="left:706px;top:200px" width="8" height="4" viewBox="0 0 8 4"><polygon points="0,0 8,0 4,4" fill="#a9a9a9"/></svg>
<div class="a" style="left:782px;top:158px;width:1px;height:61px;background:#cfcfcf"></div>
<div class="t" style="left:729px;width:46px;text-align:right;top:169px;font-weight:bold;color:#fff">Rok</div>
<div class="a" style="left:737px;top:192px;width:34px;height:20px;background:#fff;border:1px solid #d9d4d0"></div>
<svg style="left:741px;top:197px" width="11" height="11" viewBox="0 0 11 11"><path d="M0.5,0 H10 L6.2,5 V10 L4.2,8.8 V5 Z" fill="#c8c8c8"/></svg>
<svg style="left:760px;top:200px" width="8" height="4" viewBox="0 0 8 4"><polygon points="0,0 8,0 4,4" fill="#a9a9a9"/></svg>
<div class="a" style="left:906px;top:158px;width:1px;height:61px;background:#cfcfcf"></div>
<div class="t" style="left:791px;top:168px;width:116px;overflow:hidden;font-weight:bold;color:#fff">Zodpovedná osoba</div>
<div class="a" style="left:791px;top:192px;width:104px;height:20px;background:#fff;border:1px solid #d9d4d0"></div>
<svg style="left:795px;top:197px" width="11" height="11" viewBox="0 0 11 11"><path d="M0.5,0 H10 L6.2,5 V10 L4.2,8.8 V5 Z" fill="#c8c8c8"/></svg>
<svg style="left:884px;top:200px" width="8" height="4" viewBox="0 0 8 4"><polygon points="0,0 8,0 4,4" fill="#a9a9a9"/></svg>
<div class="a" style="left:967px;top:158px;width:1px;height:61px;background:#cfcfcf"></div>
<div class="t" style="left:907px;width:53px;text-align:right;top:169px;font-weight:bold;color:#fff">Cena</div>
<div class="a" style="left:1036px;top:158px;width:1px;height:61px;background:#cfcfcf"></div>
<div class="t" style="left:976px;top:168px;width:61px;overflow:hidden;font-weight:bold;color:#fff">Cena spolu</div>
<div class="a" style="left:1159px;top:158px;width:1px;height:61px;background:#cfcfcf"></div>
<div class="t" style="left:1045px;top:168px;width:115px;overflow:hidden;font-weight:bold;color:#fff">Dátum nadobudnutia</div>
<div class="a" style="left:1045px;top:192px;width:103px;height:20px;background:#fff;border:1px solid #d9d4d0"></div>
<svg style="left:1049px;top:197px" width="11" height="11" viewBox="0 0 11 11"><path d="M0.5,0 H10 L6.2,5 V10 L4.2,8.8 V5 Z" fill="#c8c8c8"/></svg>
<svg style="left:1137px;top:200px" width="8" height="4" viewBox="0 0 8 4"><polygon points="0,0 8,0 4,4" fill="#a9a9a9"/></svg>
<div class="a" style="left:1256px;top:158px;width:1px;height:61px;background:#cfcfcf"></div>
<div class="t" style="left:1168px;top:168px;width:89px;overflow:hidden;font-weight:bold;color:#fff">Výrobné číslo</div>
<div class="t" style="left:1265px;top:168px;width:136px;overflow:hidden;font-weight:bold;color:#fff">Spôsob nadobudnutia</div>
<div class="a" style="left:1265px;top:192px;width:39px;height:20px;background:#fff;border:1px solid #d9d4d0"></div>
<svg style="left:1269px;top:197px" width="11" height="11" viewBox="0 0 11 11"><path d="M0.5,0 H10 L6.2,5 V10 L4.2,8.8 V5 Z" fill="#c8c8c8"/></svg>
<svg style="left:571px;top:169px" width="8" height="8" viewBox="0 0 8 8"><polygon points="0,7.5 4,0 8,7.5" fill="#fff"/></svg>
<div class="a" style="left:246px;top:219px;width:1044px;height:572px;background:#fff;overflow:hidden">
<div class="a" style="left:0px;top:6px;width:1044px;height:1px;background:#cce6fb"></div>
<div class="a" style="left:0px;top:7px;width:1044px;height:33px;background:#fbfbfb"></div>
<svg style="left:7px;top:16px" width="16" height="17" viewBox="0 0 16 17"><rect x="3.5" y="0.5" width="9" height="6.5" fill="#c2e4fb" stroke="#91a6c0" stroke-width="0.9"/><rect x="6.5" y="7" width="3" height="1.3" fill="#91a6c0"/><rect x="0.3" y="8" width="15.4" height="2" rx="0.8" fill="#dcb56c"/><rect x="1.6" y="9.5" width="1.8" height="6.8" rx="0.6" fill="#e0b96e"/><rect x="12.6" y="9.5" width="1.8" height="6.8" rx="0.6" fill="#e0b96e"/><rect x="3.5" y="12.4" width="9" height="1.3" fill="#ebe3d3"/></svg>
<div class="t" style="left:37px;top:17px;color:#000;">007</div>
<div class="t" style="left:111px;top:17px;color:#000;">Nábytok</div>
<div class="t" style="left:200px;top:17px;color:#000;"><span style="padding-left:94px">ská</span></div>
<div class="t" style="left:335px;width:47px;text-align:right;top:17px;color:#000;">1</div>
<div class="t" style="left:396px;top:17px;color:#000;">K2</div>
<div class="t" style="left:483px;width:47px;text-align:right;top:17px;color:#000;">2025</div>
<div class="t" style="left:544px;top:17px;color:#000;">Učiteľ 05</div>
<div class="t" style="left:661px;width:54px;text-align:right;top:17px;color:#000;">50.00</div>
<div class="t" style="left:722px;width:62px;text-align:right;top:17px;color:#000;">50.00</div>
<div class="t" style="left:798px;top:17px;color:#000;">04. 03. 2025</div>
<div class="t" style="left:1018px;top:17px;color:#000;">kúpa</div>
<div class="a" style="left:0px;top:40px;width:1044px;height:1px;background:#cce6fb"></div>
<div class="a" style="left:0px;top:41px;width:1044px;height:38px;background:#ffffff"></div>
<svg style="left:7px;top:52px" width="16" height="17" viewBox="0 0 16 17"><rect x="3.5" y="0.5" width="9" height="6.5" fill="#c2e4fb" stroke="#91a6c0" stroke-width="0.9"/><rect x="6.5" y="7" width="3" height="1.3" fill="#91a6c0"/><rect x="0.3" y="8" width="15.4" height="2" rx="0.8" fill="#dcb56c"/><rect x="1.6" y="9.5" width="1.8" height="6.8" rx="0.6" fill="#e0b96e"/><rect x="12.6" y="9.5" width="1.8" height="6.8" rx="0.6" fill="#e0b96e"/><rect x="3.5" y="12.4" width="9" height="1.3" fill="#ebe3d3"/></svg>
<div class="t" style="left:37px;top:53px;color:#000;">25103009</div>
<div class="t" style="left:111px;top:53px;color:#000;">Nábytok</div>
<div class="t" style="left:335px;width:47px;text-align:right;top:53px;color:#000;">3</div>
<div class="t" style="left:396px;top:53px;color:#000;">K7</div>
<div class="t" style="left:544px;top:53px;color:#000;">Učiteľ 05</div>
<div class="t" style="left:1018px;top:53px;color:#000;">kúpa</div>
<div class="a" style="left:0px;top:79px;width:1044px;height:1px;background:#cce6fb"></div>
<div class="a" style="left:0px;top:80px;width:1044px;height:33px;background:#fbfbfb"></div>
<svg style="left:7px;top:89px" width="16" height="17" viewBox="0 0 16 17"><rect x="3.5" y="0.5" width="9" height="6.5" fill="#c2e4fb" stroke="#91a6c0" stroke-width="0.9"/><rect x="6.5" y="7" width="3" height="1.3" fill="#91a6c0"/><rect x="0.3" y="8" width="15.4" height="2" rx="0.8" fill="#dcb56c"/><rect x="1.6" y="9.5" width="1.8" height="6.8" rx="0.6" fill="#e0b96e"/><rect x="12.6" y="9.5" width="1.8" height="6.8" rx="0.6" fill="#e0b96e"/><rect x="3.5" y="12.4" width="9" height="1.3" fill="#ebe3d3"/></svg>
<div class="t" style="left:37px;top:90px;color:#000;">110</div>
<div class="t" style="left:111px;top:90px;color:#000;">Nábytok</div>
<div class="t" style="left:335px;width:47px;text-align:right;top:90px;color:#000;">1</div>
<div class="t" style="left:396px;top:90px;color:#000;">K3</div>
<div class="t" style="left:483px;width:47px;text-align:right;top:90px;color:#000;">2025</div>
<div class="t" style="left:544px;top:90px;color:#000;">Učiteľ 05</div>
<div class="t" style="left:661px;width:54px;text-align:right;top:90px;color:#000;">50.00</div>
<div class="t" style="left:722px;width:62px;text-align:right;top:90px;color:#000;">50.00</div>
<div class="t" style="left:798px;top:90px;color:#000;">04. 03. 2025</div>
<div class="t" style="left:1018px;top:90px;color:#000;">kúpa</div>
<div class="a" style="left:0px;top:113px;width:1044px;height:1px;background:#cce6fb"></div>
<div class="a" style="left:0px;top:114px;width:1044px;height:38px;background:#ffffff"></div>
<svg style="left:7px;top:125px" width="16" height="17" viewBox="0 0 16 17"><rect x="3.5" y="0.5" width="9" height="6.5" fill="#c2e4fb" stroke="#91a6c0" stroke-width="0.9"/><rect x="6.5" y="7" width="3" height="1.3" fill="#91a6c0"/><rect x="0.3" y="8" width="15.4" height="2" rx="0.8" fill="#dcb56c"/><rect x="1.6" y="9.5" width="1.8" height="6.8" rx="0.6" fill="#e0b96e"/><rect x="12.6" y="9.5" width="1.8" height="6.8" rx="0.6" fill="#e0b96e"/><rect x="3.5" y="12.4" width="9" height="1.3" fill="#ebe3d3"/></svg>
<div class="t" style="left:37px;top:126px;color:#000;">ZŠ8171</div>
<div class="t" style="left:111px;top:126px;color:#000;">-</div>
<div class="t" style="left:200px;top:119px;color:#000;"><span style="padding-left:94px">pro</span><br>&nbsp;</div>
<div class="t" style="left:335px;width:47px;text-align:right;top:126px;color:#000;">1</div>
<div class="t" style="left:396px;top:126px;color:#000;">-</div>
<div class="t" style="left:544px;top:126px;color:#000;">Učiteľ 08</div>
<div class="t" style="left:661px;width:54px;text-align:right;top:126px;color:#000;">7730.00</div>
<div class="t" style="left:722px;width:62px;text-align:right;top:126px;color:#000;">7730.00</div>
<div class="a" style="left:0px;top:152px;width:1044px;height:1px;background:#cce6fb"></div>
<div class="a" style="left:0px;top:153px;width:1044px;height:38px;background:#fbfbfb"></div>
<svg style="left:7px;top:164px" width="16" height="17" viewBox="0 0 16 17"><rect x="3.5" y="0.5" width="9" height="6.5" fill="#c2e4fb" stroke="#91a6c0" stroke-width="0.9"/><rect x="6.5" y="7" width="3" height="1.3" fill="#91a6c0"/><rect x="0.3" y="8" width="15.4" height="2" rx="0.8" fill="#dcb56c"/><rect x="1.6" y="9.5" width="1.8" height="6.8" rx="0.6" fill="#e0b96e"/><rect x="12.6" y="9.5" width="1.8" height="6.8" rx="0.6" fill="#e0b96e"/><rect x="3.5" y="12.4" width="9" height="1.3" fill="#ebe3d3"/></svg>
<div class="t" style="left:37px;top:165px;color:#000;">ZŠ7254</div>
<div class="t" style="left:111px;top:165px;color:#000;">-</div>
<div class="t" style="left:200px;top:158px;color:#000;"><span style="padding-left:90px">árový</span><br>&nbsp;</div>
<div class="t" style="left:335px;width:47px;text-align:right;top:165px;color:#000;">1</div>
<div class="t" style="left:396px;top:165px;color:#000;">-</div>
<div class="t" style="left:544px;top:165px;color:#000;">Učiteľ 08</div>
<div class="t" style="left:661px;width:54px;text-align:right;top:165px;color:#000;">5390.00</div>
<div class="t" style="left:722px;width:62px;text-align:right;top:165px;color:#000;">5390.00</div>
<div class="a" style="left:0px;top:191px;width:1044px;height:1px;background:#cce6fb"></div>
<div class="a" style="left:0px;top:192px;width:1044px;height:38px;background:#ffffff"></div>
<svg style="left:7px;top:203px" width="16" height="17" viewBox="0 0 16 17"><rect x="3.5" y="0.5" width="9" height="6.5" fill="#c2e4fb" stroke="#91a6c0" stroke-width="0.9"/><rect x="6.5" y="7" width="3" height="1.3" fill="#91a6c0"/><rect x="0.3" y="8" width="15.4" height="2" rx="0.8" fill="#dcb56c"/><rect x="1.6" y="9.5" width="1.8" height="6.8" rx="0.6" fill="#e0b96e"/><rect x="12.6" y="9.5" width="1.8" height="6.8" rx="0.6" fill="#e0b96e"/><rect x="3.5" y="12.4" width="9" height="1.3" fill="#ebe3d3"/></svg>
<div class="t" style="left:37px;top:204px;color:#000;">ZŠ6660</div>
<div class="t" style="left:111px;top:204px;color:#000;">-</div>
<div class="t" style="left:200px;top:197px;color:#000;"><span style="padding-left:91px">hráč</span><br>&nbsp;</div>
<div class="t" style="left:335px;width:47px;text-align:right;top:204px;color:#000;">1</div>
<div class="t" style="left:396px;top:204px;color:#000;">-</div>
<div class="t" style="left:544px;top:204px;color:#000;">Učiteľ 08</div>
<div class="t" style="left:661px;width:54px;text-align:right;top:204px;color:#000;">0.00</div>
<div class="t" style="left:722px;width:62px;text-align:right;top:204px;color:#000;">0.00</div>
<div class="a" style="left:0px;top:230px;width:1044px;height:1px;background:#cce6fb"></div>
<div class="a" style="left:0px;top:231px;width:1044px;height:33px;background:#fbfbfb"></div>
<svg style="left:7px;top:240px" width="16" height="17" viewBox="0 0 16 17"><rect x="3.5" y="0.5" width="9" height="6.5" fill="#c2e4fb" stroke="#91a6c0" stroke-width="0.9"/><rect x="6.5" y="7" width="3" height="1.3" fill="#91a6c0"/><rect x="0.3" y="8" width="15.4" height="2" rx="0.8" fill="#dcb56c"/><rect x="1.6" y="9.5" width="1.8" height="6.8" rx="0.6" fill="#e0b96e"/><rect x="12.6" y="9.5" width="1.8" height="6.8" rx="0.6" fill="#e0b96e"/><rect x="3.5" y="12.4" width="9" height="1.3" fill="#ebe3d3"/></svg>
<div class="t" style="left:37px;top:241px;color:#000;">040</div>
<div class="t" style="left:111px;top:241px;color:#000;">Nábytok</div>
<div class="t" style="left:200px;top:241px;color:#000;">B stolička detská</div>
<div class="t" style="left:335px;width:47px;text-align:right;top:241px;color:#000;">1</div>
<div class="t" style="left:396px;top:241px;color:#000;">K1</div>
<div class="t" style="left:483px;width:47px;text-align:right;top:241px;color:#000;">2025</div>
<div class="t" style="left:544px;top:241px;color:#000;">Učiteľ 05</div>
<div class="t" style="left:661px;width:54px;text-align:right;top:241px;color:#000;">50.00</div>
<div class="t" style="left:722px;width:62px;text-align:right;top:241px;color:#000;">50.00</div>
<div class="t" style="left:798px;top:241px;color:#000;">04. 03. 2025</div>
<div class="t" style="left:1018px;top:241px;color:#000;">kúpa</div>
<div class="a" style="left:0px;top:264px;width:1044px;height:1px;background:#cce6fb"></div>
<div class="a" style="left:0px;top:265px;width:1044px;height:38px;background:#ffffff"></div>
<svg style="left:7px;top:276px" width="16" height="17" viewBox="0 0 16 17"><rect x="3.5" y="0.5" width="9" height="6.5" fill="#c2e4fb" stroke="#91a6c0" stroke-width="0.9"/><rect x="6.5" y="7" width="3" height="1.3" fill="#91a6c0"/><rect x="0.3" y="8" width="15.4" height="2" rx="0.8" fill="#dcb56c"/><rect x="1.6" y="9.5" width="1.8" height="6.8" rx="0.6" fill="#e0b96e"/><rect x="12.6" y="9.5" width="1.8" height="6.8" rx="0.6" fill="#e0b96e"/><rect x="3.5" y="12.4" width="9" height="1.3" fill="#ebe3d3"/></svg>
<div class="t" style="left:37px;top:277px;color:#000;">ZŠ8109</div>
<div class="t" style="left:111px;top:277px;color:#000;">-</div>
<div class="t" style="left:200px;top:270px;color:#000;">Baňka Erlenmeyera,<br>250 ml</div>
<div class="t" style="left:335px;width:47px;text-align:right;top:277px;color:#000;">15</div>
<div class="t" style="left:396px;top:277px;color:#000;">-</div>
<div class="t" style="left:544px;top:277px;color:#000;">Učiteľ 08</div>
<div class="t" style="left:661px;width:54px;text-align:right;top:277px;color:#000;">72.60</div>
<div class="t" style="left:722px;width:62px;text-align:right;top:277px;color:#000;">1089.00</div>
<div class="a" style="left:0px;top:303px;width:1044px;height:1px;background:#cce6fb"></div>
<div class="a" style="left:0px;top:304px;width:1044px;height:38px;background:#fbfbfb"></div>
<svg style="left:7px;top:315px" width="16" height="17" viewBox="0 0 16 17"><rect x="3.5" y="0.5" width="9" height="6.5" fill="#c2e4fb" stroke="#91a6c0" stroke-width="0.9"/><rect x="6.5" y="7" width="3" height="1.3" fill="#91a6c0"/><rect x="0.3" y="8" width="15.4" height="2" rx="0.8" fill="#dcb56c"/><rect x="1.6" y="9.5" width="1.8" height="6.8" rx="0.6" fill="#e0b96e"/><rect x="12.6" y="9.5" width="1.8" height="6.8" rx="0.6" fill="#e0b96e"/><rect x="3.5" y="12.4" width="9" height="1.3" fill="#ebe3d3"/></svg>
<div class="t" style="left:37px;top:316px;color:#000;">ZŠ8108</div>
<div class="t" style="left:111px;top:316px;color:#000;">-</div>
<div class="t" style="left:200px;top:309px;color:#000;">Baňka s plochým dnem<br>- 250 ml</div>
<div class="t" style="left:335px;width:47px;text-align:right;top:316px;color:#000;">15</div>
<div class="t" style="left:396px;top:316px;color:#000;">-</div>
<div class="t" style="left:544px;top:316px;color:#000;">Učiteľ 08</div>
<div class="t" style="left:661px;width:54px;text-align:right;top:316px;color:#000;">79.86</div>
<div class="t" style="left:722px;width:62px;text-align:right;top:316px;color:#000;">1197.90</div>
<div class="a" style="left:0px;top:342px;width:1044px;height:1px;background:#cce6fb"></div>
<div class="a" style="left:0px;top:343px;width:1044px;height:33px;background:#ffffff"></div>
<svg style="left:7px;top:352px" width="16" height="17" viewBox="0 0 16 17"><rect x="3.5" y="0.5" width="9" height="6.5" fill="#c2e4fb" stroke="#91a6c0" stroke-width="0.9"/><rect x="6.5" y="7" width="3" height="1.3" fill="#91a6c0"/><rect x="0.3" y="8" width="15.4" height="2" rx="0.8" fill="#dcb56c"/><rect x="1.6" y="9.5" width="1.8" height="6.8" rx="0.6" fill="#e0b96e"/><rect x="12.6" y="9.5" width="1.8" height="6.8" rx="0.6" fill="#e0b96e"/><rect x="3.5" y="12.4" width="9" height="1.3" fill="#ebe3d3"/></svg>
<div class="t" style="left:37px;top:353px;color:#000;">ZŠ7909</div>
<div class="t" style="left:111px;top:353px;color:#000;">-</div>
<div class="t" style="left:200px;top:353px;color:#000;">Baterie dřezová</div>
<div class="t" style="left:335px;width:47px;text-align:right;top:353px;color:#000;">1</div>
<div class="t" style="left:396px;top:353px;color:#000;">-</div>
<div class="t" style="left:544px;top:353px;color:#000;">Učiteľ 08</div>
<div class="t" style="left:661px;width:54px;text-align:right;top:353px;color:#000;">2057.00</div>
<div class="t" style="left:722px;width:62px;text-align:right;top:353px;color:#000;">2057.00</div>
<div class="a" style="left:0px;top:376px;width:1044px;height:1px;background:#cce6fb"></div>
<div class="a" style="left:0px;top:377px;width:1044px;height:38px;background:#fbfbfb"></div>
<svg style="left:7px;top:388px" width="16" height="17" viewBox="0 0 16 17"><rect x="3.5" y="0.5" width="9" height="6.5" fill="#c2e4fb" stroke="#91a6c0" stroke-width="0.9"/><rect x="6.5" y="7" width="3" height="1.3" fill="#91a6c0"/><rect x="0.3" y="8" width="15.4" height="2" rx="0.8" fill="#dcb56c"/><rect x="1.6" y="9.5" width="1.8" height="6.8" rx="0.6" fill="#e0b96e"/><rect x="12.6" y="9.5" width="1.8" height="6.8" rx="0.6" fill="#e0b96e"/><rect x="3.5" y="12.4" width="9" height="1.3" fill="#ebe3d3"/></svg>
<div class="t" style="left:37px;top:389px;color:#777;text-decoration:line-through;">ZŠ8390</div>
<div class="t" style="left:111px;top:389px;color:#777;text-decoration:line-through;">-</div>
<div class="t" style="left:200px;top:389px;color:#777;text-decoration:line-through;">Baterie pro dron</div>
<div class="t" style="left:335px;width:47px;text-align:right;top:389px;color:#777;text-decoration:line-through;">2</div>
<div class="t" style="left:396px;top:382px;color:#777;text-decoration:line-through;">Chemické<br>laboratórium</div>
<div class="t" style="left:483px;width:47px;text-align:right;top:389px;color:#777;text-decoration:line-through;">2025</div>
<div class="t" style="left:544px;top:389px;color:#777;text-decoration:line-through;">Učiteľ 08</div>
<div class="t" style="left:661px;width:54px;text-align:right;top:389px;color:#777;text-decoration:line-through;">2889.00</div>
<div class="t" style="left:722px;width:62px;text-align:right;top:389px;color:#777;text-decoration:line-through;">5778.00</div>
<div class="t" style="left:798px;top:389px;color:#777;text-decoration:line-through;">15. 07. 2025</div>
<div class="t" style="left:921px;top:389px;color:#777;text-decoration:line-through;">sn8390</div>
<div class="a" style="left:0px;top:415px;width:1044px;height:1px;background:#cce6fb"></div>
<div class="a" style="left:0px;top:416px;width:1044px;height:33px;background:#ffffff"></div>
<svg style="left:7px;top:425px" width="16" height="17" viewBox="0 0 16 17"><rect x="3.5" y="0.5" width="9" height="6.5" fill="#c2e4fb" stroke="#91a6c0" stroke-width="0.9"/><rect x="6.5" y="7" width="3" height="1.3" fill="#91a6c0"/><rect x="0.3" y="8" width="15.4" height="2" rx="0.8" fill="#dcb56c"/><rect x="1.6" y="9.5" width="1.8" height="6.8" rx="0.6" fill="#e0b96e"/><rect x="12.6" y="9.5" width="1.8" height="6.8" rx="0.6" fill="#e0b96e"/><rect x="3.5" y="12.4" width="9" height="1.3" fill="#ebe3d3"/></svg>
<div class="t" style="left:37px;top:426px;color:#000;">ZŠ8464</div>
<div class="t" style="left:111px;top:426px;color:#000;">-</div>
<div class="t" style="left:200px;top:426px;color:#000;">Bazén</div>
<div class="t" style="left:335px;width:47px;text-align:right;top:426px;color:#000;">1</div>
<div class="t" style="left:396px;top:426px;color:#000;">-</div>
<div class="t" style="left:544px;top:426px;color:#000;">Učiteľ 08</div>
<div class="t" style="left:661px;width:54px;text-align:right;top:426px;color:#000;">9685.00</div>
<div class="t" style="left:722px;width:62px;text-align:right;top:426px;color:#000;">9685.00</div>
<div class="a" style="left:0px;top:449px;width:1044px;height:1px;background:#cce6fb"></div>
<div class="a" style="left:0px;top:450px;width:1044px;height:33px;background:#fbfbfb"></div>
<svg style="left:7px;top:459px" width="16" height="17" viewBox="0 0 16 17"><rect x="3.5" y="0.5" width="9" height="6.5" fill="#c2e4fb" stroke="#91a6c0" stroke-width="0.9"/><rect x="6.5" y="7" width="3" height="1.3" fill="#91a6c0"/><rect x="0.3" y="8" width="15.4" height="2" rx="0.8" fill="#dcb56c"/><rect x="1.6" y="9.5" width="1.8" height="6.8" rx="0.6" fill="#e0b96e"/><rect x="12.6" y="9.5" width="1.8" height="6.8" rx="0.6" fill="#e0b96e"/><rect x="3.5" y="12.4" width="9" height="1.3" fill="#ebe3d3"/></svg>
<div class="t" style="left:37px;top:460px;color:#000;">008</div>
<div class="t" style="left:111px;top:460px;color:#000;">Nábytok</div>
<div class="t" style="left:200px;top:460px;color:#000;">bety stolička detská</div>
<div class="t" style="left:335px;width:47px;text-align:right;top:460px;color:#000;">1</div>
<div class="t" style="left:396px;top:460px;color:#000;">K2</div>
<div class="t" style="left:483px;width:47px;text-align:right;top:460px;color:#000;">2025</div>
<div class="t" style="left:544px;top:460px;color:#000;">Učiteľ 05</div>
<div class="t" style="left:661px;width:54px;text-align:right;top:460px;color:#000;">50.00</div>
<div class="t" style="left:722px;width:62px;text-align:right;top:460px;color:#000;">50.00</div>
<div class="t" style="left:798px;top:460px;color:#000;">04. 03. 2025</div>
<div class="t" style="left:1018px;top:460px;color:#000;">kúpa</div>
<div class="a" style="left:0px;top:483px;width:1044px;height:1px;background:#cce6fb"></div>
<div class="a" style="left:0px;top:484px;width:1044px;height:38px;background:#ffffff"></div>
<svg style="left:7px;top:495px" width="16" height="17" viewBox="0 0 16 17"><rect x="3.5" y="0.5" width="9" height="6.5" fill="#c2e4fb" stroke="#91a6c0" stroke-width="0.9"/><rect x="6.5" y="7" width="3" height="1.3" fill="#91a6c0"/><rect x="0.3" y="8" width="15.4" height="2" rx="0.8" fill="#dcb56c"/><rect x="1.6" y="9.5" width="1.8" height="6.8" rx="0.6" fill="#e0b96e"/><rect x="12.6" y="9.5" width="1.8" height="6.8" rx="0.6" fill="#e0b96e"/><rect x="3.5" y="12.4" width="9" height="1.3" fill="#ebe3d3"/></svg>
<div class="t" style="left:37px;top:496px;color:#000;">209</div>
<div class="t" style="left:111px;top:496px;color:#000;">Nábytok</div>
<div class="t" style="left:200px;top:489px;color:#000;">béžová stolička<br>učiteľská</div>
<div class="t" style="left:335px;width:47px;text-align:right;top:496px;color:#000;">1</div>
<div class="t" style="left:396px;top:496px;color:#000;">K7</div>
<div class="t" style="left:483px;width:47px;text-align:right;top:496px;color:#000;">2025</div>
<div class="t" style="left:544px;top:496px;color:#000;">Učiteľ 05</div>
<div class="t" style="left:661px;width:54px;text-align:right;top:496px;color:#000;">97.00</div>
<div class="t" style="left:722px;width:62px;text-align:right;top:496px;color:#000;">97.00</div>
<div class="t" style="left:798px;top:496px;color:#000;">21. 03. 2025</div>
<div class="t" style="left:1018px;top:496px;color:#000;">kúpa</div>
<div class="a" style="left:0px;top:522px;width:1044px;height:1px;background:#cce6fb"></div>
<div class="a" style="left:0px;top:523px;width:1044px;height:38px;background:#fbfbfb"></div>
<svg style="left:7px;top:534px" width="16" height="17" viewBox="0 0 16 17"><rect x="3.5" y="0.5" width="9" height="6.5" fill="#c2e4fb" stroke="#91a6c0" stroke-width="0.9"/><rect x="6.5" y="7" width="3" height="1.3" fill="#91a6c0"/><rect x="0.3" y="8" width="15.4" height="2" rx="0.8" fill="#dcb56c"/><rect x="1.6" y="9.5" width="1.8" height="6.8" rx="0.6" fill="#e0b96e"/><rect x="12.6" y="9.5" width="1.8" height="6.8" rx="0.6" fill="#e0b96e"/><rect x="3.5" y="12.4" width="9" height="1.3" fill="#ebe3d3"/></svg>
<div class="t" style="left:37px;top:535px;color:#000;">ZŠ8147</div>
<div class="t" style="left:111px;top:535px;color:#000;">-</div>
<div class="t" style="left:200px;top:528px;color:#000;">Bleskojistka růžková<br>Conatex</div>
<div class="t" style="left:335px;width:47px;text-align:right;top:535px;color:#000;">1</div>
<div class="t" style="left:396px;top:535px;color:#000;">-</div>
<div class="t" style="left:544px;top:535px;color:#000;">Učiteľ 08</div>
<div class="t" style="left:661px;width:54px;text-align:right;top:535px;color:#000;">9680.00</div>
<div class="t" style="left:722px;width:62px;text-align:right;top:535px;color:#000;">9680.00</div>
<div class="a" style="left:0px;top:561px;width:1044px;height:1px;background:#cce6fb"></div>
<div class="a" style="left:0px;top:562px;width:1044px;height:33px;background:#ffffff"></div>
<svg style="left:7px;top:571px" width="16" height="17" viewBox="0 0 16 17"><rect x="3.5" y="0.5" width="9" height="6.5" fill="#c2e4fb" stroke="#91a6c0" stroke-width="0.9"/><rect x="6.5" y="7" width="3" height="1.3" fill="#91a6c0"/><rect x="0.3" y="8" width="15.4" height="2" rx="0.8" fill="#dcb56c"/><rect x="1.6" y="9.5" width="1.8" height="6.8" rx="0.6" fill="#e0b96e"/><rect x="12.6" y="9.5" width="1.8" height="6.8" rx="0.6" fill="#e0b96e"/><rect x="3.5" y="12.4" width="9" height="1.3" fill="#ebe3d3"/></svg>
<div class="t" style="left:37px;top:572px;color:#000;">ZŠ8148</div>
<div class="t" style="left:111px;top:572px;color:#000;">-</div>
<div class="t" style="left:200px;top:572px;color:#000;">Bodlák</div>
<div class="t" style="left:335px;width:47px;text-align:right;top:572px;color:#000;">1</div>
<div class="t" style="left:396px;top:572px;color:#000;">-</div>
<div class="t" style="left:544px;top:572px;color:#000;">Učiteľ 08</div>
<div class="t" style="left:661px;width:54px;text-align:right;top:572px;color:#000;">120.00</div>
<div class="t" style="left:722px;width:62px;text-align:right;top:572px;color:#000;">120.00</div>
<div class="a" style="left:0px;top:595px;width:1044px;height:1px;background:#cce6fb"></div>
<div class="a" style="left:29px;top:0px;width:1px;height:572px;background:#cce6fb"></div>
<div class="a" style="left:103px;top:0px;width:1px;height:572px;background:#cce6fb"></div>
<div class="a" style="left:192px;top:0px;width:1px;height:572px;background:#cce6fb"></div>
<div class="a" style="left:334px;top:0px;width:1px;height:572px;background:#cce6fb"></div>
<div class="a" style="left:388px;top:0px;width:1px;height:572px;background:#cce6fb"></div>
<div class="a" style="left:482px;top:0px;width:1px;height:572px;background:#cce6fb"></div>
<div class="a" style="left:536px;top:0px;width:1px;height:572px;background:#cce6fb"></div>
<div class="a" style="left:660px;top:0px;width:1px;height:572px;background:#cce6fb"></div>
<div class="a" style="left:721px;top:0px;width:1px;height:572px;background:#cce6fb"></div>
<div class="a" style="left:790px;top:0px;width:1px;height:572px;background:#cce6fb"></div>
<div class="a" style="left:913px;top:0px;width:1px;height:572px;background:#cce6fb"></div>
<div class="a" style="left:1010px;top:0px;width:1px;height:572px;background:#cce6fb"></div>
</div>
<div class="a" style="left:1290px;top:219px;width:14px;height:572px;background:#fbfbfb"></div>
<svg style="left:1293px;top:224px" width="10" height="7" viewBox="0 0 10 7"><polygon points="5,0.3 9.7,6.7 0.3,6.7" fill="#8a8a8a" stroke="#8a8a8a" stroke-width="0.6" stroke-linejoin="round"/></svg>
<div class="a" style="left:1293px;top:238px;width:9px;height:17px;border-radius:4.5px;background:#8a8a8a"></div>
<svg style="left:1293px;top:780px" width="10" height="7" viewBox="0 0 10 7"><polygon points="0.3,0.3 9.7,0.3 5,6.7" fill="#8a8a8a" stroke="#8a8a8a" stroke-width="0.6" stroke-linejoin="round"/></svg>
<div class="a" style="left:246px;top:791px;width:1058px;height:14px;background:#fbfbfb"></div>
<svg style="left:250px;top:794px" width="8" height="9" viewBox="0 0 8 9"><polygon points="0.5,4.5 7.5,0.3 7.5,8.7" fill="#8a8a8a" stroke="#8a8a8a" stroke-width="0.6" stroke-linejoin="round"/></svg>
<div class="a" style="left:264px;top:794px;width:916px;height:9px;border-radius:4.5px;background:#8a8a8a"></div>
<svg style="left:1278px;top:794px" width="8" height="9" viewBox="0 0 8 9"><polygon points="7.5,4.5 0.5,0.3 0.5,8.7" fill="#8a8a8a" stroke="#8a8a8a" stroke-width="0.6" stroke-linejoin="round"/></svg>
<div class="a" style="left:362px;top:209px;width:178px;height:232px;background:#fff;border:1px solid #d3d3d3;box-shadow:3px 4px 7px rgba(0,0,0,0.38);z-index:10"></div>
<svg style="left:366px;top:224px;z-index:11" width="11" height="11" viewBox="0 0 11 11"><path d="M1.2,6 L4.3,9.6 L10.2,1" fill="none" stroke="#111" stroke-width="1.5" stroke-linejoin="round"/></svg>
<div class="t" style="left:380px;top:223px;color:#111;z-index:11">Zobraziť všetko</div>
<div class="a" style="left:363px;top:246px;width:176px;height:1px;background:#c9d7e6;z-index:11"></div>
<div class="t" style="left:380px;top:256px;color:#333;z-index:11">- (854)</div>
<div class="t" style="left:380px;top:282px;color:#333;z-index:11">Kuchynské zariadenie (68)</div>
<div class="t" style="left:380px;top:308px;color:#333;z-index:11">IT equipment (9)</div>
<div class="t" style="left:380px;top:334px;color:#333;z-index:11">Furniture (12)</div>
<div class="t" style="left:380px;top:360px;color:#333;z-index:11">Elektronické zariadenia (8)</div>
<div class="t" style="left:380px;top:386px;color:#333;z-index:11">Učebné pomôcky (3)</div>
<div class="t" style="left:380px;top:412px;color:#333;z-index:11">Nábytok (105)</div>
<div class="a" style="left:349px;top:184px;width:85px;height:37px;border:4px solid #ff0000;z-index:12"></div>
<div class="a" style="left:368px;top:400px;width:105px;height:37px;border:4px solid #ff0000;z-index:12"></div>
</body></html>
